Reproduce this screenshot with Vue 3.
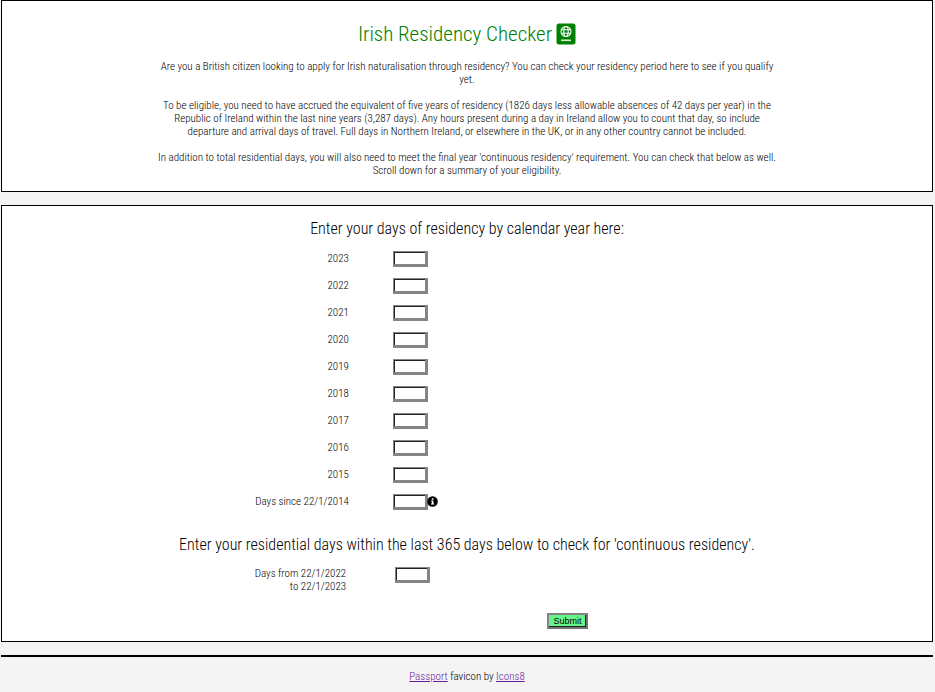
<script setup>
import { reactive, ref } from 'vue'

const rows = [
  ...[2023, 2022, 2021, 2020, 2019, 2018, 2017, 2016, 2015].map((y) => ({ id: `y${y}`, label: String(y) })),
  { id: 'since', label: 'Days since 22/1/2014', info: true },
]
const days = reactive({})
const lastYear = ref('')
</script>

<template>
  <div class="page">
    <header class="panel intro">
      <h1>
        Irish Residency Checker
        <svg class="passport" viewBox="0 0 20 22" aria-hidden="true">
          <rect x="0.5" y="0.5" width="19" height="21" rx="2.5" fill="#008000" />
          <g fill="none" stroke="#fff" stroke-width="1.1">
            <circle cx="10" cy="8.5" r="5" />
            <ellipse cx="10" cy="8.5" rx="2.2" ry="5" />
            <path d="M5.5 6.8h9M5.5 10.2h9" />
          </g>
          <path d="M5 17.3h10" stroke="#d5ecd5" stroke-width="1.6" />
        </svg>
      </h1>
      <div class="copy">
        <p>Are you a British citizen looking to apply for Irish naturalisation through residency? You can check your residency period here to see if you qualify<br />yet.</p>
        <p>To be eligible, you need to have accrued the equivalent of five years of residency (1826 days less allowable absences of 42 days per year) in the<br />Republic of Ireland within the last nine years (3,287 days). Any hours present during a day in Ireland allow you to count that day, so include<br />departure and arrival days of travel. Full days in Northern Ireland, or elsewhere in the UK, or in any other country cannot be included.</p>
        <p>In addition to total residential days, you will also need to meet the final year 'continuous residency' requirement. You can check that below as well.<br />Scroll down for a summary of your eligibility.</p>
      </div>
    </header>

    <form class="panel checker" @submit.prevent>
      <h2>Enter your days of residency by calendar year here:</h2>
      <div class="rows">
        <div v-for="row in rows" :key="row.id" class="row">
          <label :for="row.id">{{ row.label }}</label>
          <span class="field">
            <input :id="row.id" v-model="days[row.id]" type="text" inputmode="numeric" />
            <svg v-if="row.info" class="info" viewBox="0 0 11 11" aria-hidden="true">
              <circle cx="5.5" cy="5.5" r="5.3" />
              <path d="M4.8 2.2h1.7v1.5H4.8zM4.2 4.5h2.2v3h.8v1H4v-1h.8v-2h-.6z" fill="#fff" />
            </svg>
          </span>
        </div>
      </div>
      <h2 class="second">Enter your residential days within the last 365 days below to check for 'continuous residency'.</h2>
      <div class="row last">
        <label for="lastYear">Days from 22/1/2022<br />to 22/1/2023</label>
        <span class="field"><input id="lastYear" v-model="lastYear" type="text" inputmode="numeric" /></span>
      </div>
      <div class="actions"><button type="submit">Submit</button></div>
    </form>

    <footer><a href="#passport">Passport</a> favicon by <a href="#icons8">Icons8</a></footer>
  </div>
</template>

<style>
body {
  background: #f4f4f4;
}
</style>

<style scoped>
.page {
  padding: 0 2px 0 1px;
  color: #000;
  font: 300 11px/13px "Roboto Condensed", "Liberation Sans Narrow", Roboto, sans-serif;
}
.panel {
  background: #fff;
  border: 1px solid #000;
  text-align: center;
}
.intro {
  padding: 20px 0 14px;
  margin-bottom: 13px;
}
h1,
h2,
p {
  margin: 0;
  font-weight: 300;
}
h1 {
  display: flex;
  justify-content: center;
  align-items: center;
  gap: 4px;
  color: #008000;
  font-size: 21px;
  line-height: 26px;
}
.passport {
  width: 20px;
  height: 22px;
}
.copy {
  display: grid;
  gap: 13px;
  padding-top: 13px;
}
.checker {
  padding: 12px 0;
}
h2 {
  font-size: 16px;
  line-height: 22px;
}
.rows {
  padding-top: 5px;
}
.row {
  display: grid;
  grid-template-columns: 37.3% 1fr;
  column-gap: 44px;
  align-items: center;
  min-height: 27px;
}
.row label {
  text-align: right;
}
.field {
  display: flex;
  align-items: center;
}
input {
  box-sizing: border-box;
  width: 35px;
  height: 16px;
  padding: 0 2px;
  background: #fff;
  border: solid #858585;
  border-width: 1px 3px 3px 1px;
  border-radius: 0;
  box-shadow: inset 1px 1px #222;
  font: 10px "Liberation Sans", Arial, sans-serif;
}
.info {
  width: 11px;
  height: 11px;
  margin-left: -1px;
}
.second {
  margin-top: 19px;
}
.last {
  grid-template-columns: 37% 1fr;
  column-gap: 49px;
  align-items: start;
  padding-top: 11px;
}
.actions {
  display: flex;
  padding: 19px 0 0 58.6%;
}
button {
  box-sizing: border-box;
  width: 41px;
  height: 16px;
  padding: 0;
  color: #000;
  background: #66f58d;
  border: 2px solid;
  border-color: #858585 #767676 #767676 #858585;
  border-radius: 0;
  box-shadow: inset -1px -1px #222;
  font: 9px/11px "Liberation Sans", Arial, sans-serif;
}
footer {
  margin-top: 13px;
  padding: 13px 0 9px;
  border-top: 2px solid #000;
  text-align: center;
}
a {
  color: #6b1a9c;
}
</style>
